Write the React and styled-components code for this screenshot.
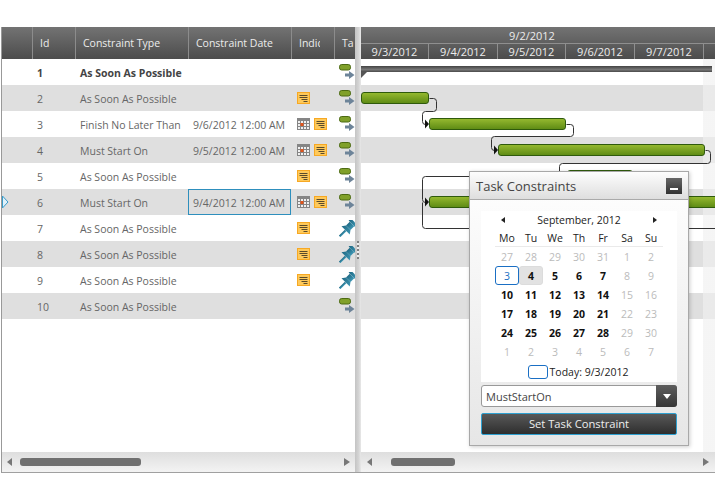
import React from 'react'
import styled, { createGlobalStyle } from 'styled-components'

const GlobalStyle = createGlobalStyle`
    body {
        margin: 0;
        background: #fff;
        font-family: "Open Sans", "Noto Sans", sans-serif;
        font-size: 10.5px;
    }
`

const COLUMNS = '31px 43px 113px 103px 43px 21px'
const WEEKEND = 'linear-gradient(90deg, transparent 342px, rgba(240, 240, 240, 0.65) 342px)'

const Gantt = styled.div`
    position: relative;
    display: flex;
    width: 714px;
    height: 446px;
    margin: 27px 0 0 1px;
    border-left: 1px solid #999;
    border-bottom: 1px solid #a0a0a0;
    box-sizing: border-box;
    overflow: hidden;
`

const GridPanel = styled.div`
    flex: 0 0 353px;
    display: flex;
    flex-direction: column;
    overflow: hidden;
`

const HeaderRow = styled.div`
    display: grid;
    grid-template-columns: ${COLUMNS};
    height: 32px;
    flex: none;
    background: linear-gradient(#737373, #4c4c4c);
`

const HeaderCell = styled.div`
    display: flex;
    align-items: center;
    padding-left: 7px;
    border-right: 1px solid #8c8c8c;
    color: #ececec;
    white-space: nowrap;
    box-sizing: border-box;
    &:last-child {
        border-right: none;
    }
`

const HeaderLabel = styled.div`
    overflow: hidden;
    max-width: ${props => props.$max ? `${props.$max}px` : 'none'};
`

const Rows = styled.div`
    flex: 1;
`

const Row = styled.div`
    display: grid;
    grid-template-columns: ${COLUMNS};
    height: 26px;
    background: ${props => props.$shaded ? '#dfdfdf' : '#fff'};
    color: ${props => props.$bold ? '#444' : '#666'};
    font-weight: ${props => props.$bold ? 700 : 400};
`

const Cell = styled.div`
    display: flex;
    align-items: center;
    padding: 1px 0 0 4px;
    white-space: nowrap;
    box-sizing: border-box;
    ${props => props.$selected && 'border: 1px solid #2e8fbd; margin: 0 1px 0 -1px;'}
`

const IconCell = styled.div`
    display: flex;
    align-items: center;
    gap: 4px;
    padding: 0 0 ${props => props.$lift || 0}px ${props => props.$pad}px;
    box-sizing: border-box;
`

const Splitter = styled.div`
    position: relative;
    flex: 0 0 6px;
    background: linear-gradient(90deg, #c4c4c4, #d4d4d4 60%, #e8e8e8);
`

const Grip = styled.div`
    position: absolute;
    left: 2px;
    top: 214px;
    width: 2px;
    height: 18px;
    background: repeating-linear-gradient(#808080 0 2px, #eee 2px 4px);
`

const TimelinePanel = styled.div`
    flex: 1;
    min-width: 0;
    display: flex;
    flex-direction: column;
    overflow: hidden;
`

const TimelineHead = styled.div`
    height: 32px;
    flex: none;
    display: flex;
    flex-direction: column;
    background: linear-gradient(#737373, #4c4c4c);
    color: #ececec;
    font-size: 11px;
`

const WeekRow = styled.div`
    height: 16px;
    width: 342px;
    display: flex;
    align-items: center;
    justify-content: center;
`

const DayRow = styled.div`
    display: flex;
    height: 15px;
    border-top: 1px solid #8f8f8f;
`

const DayCell = styled.div`
    flex: 0 0 ${props => props.$width}px;
    display: flex;
    align-items: center;
    justify-content: center;
    border-right: 1px solid #8f8f8f;
    box-sizing: border-box;
`

const TimelineBody = styled.div`
    position: relative;
    flex: 1;
    overflow: hidden;
    background: ${WEEKEND};
`

const TimelineRow = styled.div`
    position: relative;
    height: 26px;
    background: ${WEEKEND}, ${props => props.$shaded ? '#dfdfdf' : '#fff'};
`

const Bar = styled.div`
    position: absolute;
    top: 7px;
    left: ${props => props.$left}px;
    width: ${props => props.$width}px;
    height: 12px;
    border: 1px solid #2f5a0c;
    border-radius: 3px;
    background: linear-gradient(#94b82f, #5f8c15);
    box-sizing: border-box;
`

const SummaryBar = styled.div`
    position: absolute;
    top: 7px;
    left: 0;
    right: 3px;
    height: 6px;
    background: linear-gradient(#444, #777 60%, #4a4a4a);
`

const SummaryTip = styled.div`
    position: absolute;
    top: 13px;
    left: 0;
    border-top: 6px solid #555;
    border-right: 6px solid transparent;
`

const Links = styled.svg`
    position: absolute;
    top: 0;
    left: 0;
    pointer-events: none;
`

const Scrollbar = styled.div`
    position: relative;
    flex: 0 0 20px;
    background: linear-gradient(#dedede, #f3f3f3);
`

const Thumb = styled.div`
    position: absolute;
    top: 6px;
    left: ${props => props.$left}px;
    width: ${props => props.$width}px;
    height: 8px;
    border-radius: 3px;
    background: #707070;
`

const Arrow = styled.div`
    position: absolute;
    top: 6px;
    left: ${props => props.$left}px;
    border-top: 4px solid transparent;
    border-bottom: 4px solid transparent;
    ${props => props.$right ? 'border-left: 6px solid #777;' : 'border-right: 5px solid #777;'}
`

const RowMarker = styled.svg`
    position: absolute;
    left: 0;
    top: 168px;
`

const Dialog = styled.div`
    position: absolute;
    left: 467px;
    top: 144px;
    width: 220px;
    height: 275px;
    display: flex;
    flex-direction: column;
    border: 1px solid #a8a8a8;
    box-shadow: 1px 1px 4px rgba(0, 0, 0, 0.2);
    background: linear-gradient(#fff, #e6e6e6);
    box-sizing: border-box;
`

const DialogHeader = styled.div`
    flex: 0 0 28px;
    display: flex;
    align-items: center;
    justify-content: space-between;
    padding: 0 6px;
    background: linear-gradient(#fdfdfd, #dedede);
    border-bottom: 1px solid #aaa;
    box-sizing: border-box;
`

const DialogTitle = styled.div`
    padding-top: 1px;
    color: #444;
    font-size: 13px;
`

const MinButton = styled.div`
    width: 16px;
    height: 16px;
    display: flex;
    align-items: flex-end;
    justify-content: center;
    padding-bottom: 4px;
    background: linear-gradient(#666, #333);
    box-sizing: border-box;
    &::after {
        content: '';
        width: 8px;
        height: 2px;
        background: #fff;
    }
`

const DialogBody = styled.div`
    flex: 1;
    display: flex;
    flex-direction: column;
    padding: 11px 11px;
`

const Calendar = styled.div`
    height: 171px;
    display: flex;
    flex-direction: column;
    align-items: center;
    background: #fff;
`

const CalendarNav = styled.div`
    width: 156px;
    height: 17px;
    display: flex;
    align-items: center;
    justify-content: space-between;
    color: #222;
`

const NavArrow = styled.div`
    border-top: 3.5px solid transparent;
    border-bottom: 3.5px solid transparent;
    ${props => props.$right ? 'border-left: 4px solid #222;' : 'border-right: 4px solid #222;'}
`

const DayGrid = styled.div`
    display: grid;
    grid-template-columns: repeat(7, 24px);
    grid-auto-rows: 19px;
`

const WeekHead = styled.div`
    display: flex;
    align-items: center;
    justify-content: center;
    padding-top: 1px;
    color: #222;
    border-bottom: 1px solid #eaeaea;
    box-sizing: border-box;
`

const Day = styled.div`
    display: flex;
    align-items: center;
    justify-content: center;
    box-sizing: border-box;
    border-radius: 3px;
    font-weight: ${props => props.$muted ? 400 : 700};
    color: ${props => props.$muted ? '#bbb' : props.$today ? '#1a6fc4' : '#111'};
    ${props => props.$today && 'border: 1px solid #1a6fc4; font-weight: 400;'}
    ${props => props.$over && 'background: #e2e2e2; border: 1px solid #dcdcdc;'}
`

const TodayRow = styled.div`
    display: flex;
    align-items: center;
    gap: 2px;
    height: 18px;
    margin: 2px 2px 0 0;
    color: #222;
`

const TodayBox = styled.div`
    width: 20px;
    height: 14px;
    border: 1px solid #1a6fc4;
    border-radius: 3px;
    box-sizing: border-box;
`

const Combo = styled.div`
    display: flex;
    flex: none;
    height: 22px;
    margin-top: 3px;
    border: 1px solid #999;
    border-radius: 3px;
    background: #fff;
    color: #444;
    font-size: 11px;
    box-sizing: border-box;
`

const ComboText = styled.div`
    flex: 1;
    display: flex;
    align-items: center;
    padding-left: 4px;
`

const ComboButton = styled.div`
    flex: 0 0 21px;
    display: flex;
    align-items: center;
    justify-content: center;
    margin: -1px -1px -1px 0;
    border-radius: 0 3px 3px 0;
    background: linear-gradient(#5e5e5e, #363636);
    &::after {
        content: '';
        border-top: 5px solid #fff;
        border-left: 4px solid transparent;
        border-right: 4px solid transparent;
    }
`

const SetButton = styled.div`
    display: flex;
    flex: none;
    align-items: center;
    justify-content: center;
    height: 22px;
    margin-top: 6px;
    padding-bottom: 1px;
    border: 1px solid #2ea0d0;
    border-radius: 2px;
    background: linear-gradient(#585858, #2e2e2e);
    color: #eee;
    font-size: 11.2px;
    box-sizing: border-box;
`

const CalendarIcon = () => (
    <svg width="13" height="12" viewBox="0 0 13 12">
        <rect x="0" y="0" width="13" height="12" fill="#858585" />
        {[1, 4, 7, 10].map(x => [3, 6, 9].map(y => (
            <rect key={`${x}-${y}`} x={x} y={y} width="2" height="2" fill="#f0f0f0" />
        )))}
        <rect x="3.5" y="5" width="3" height="3" fill="#e2541b" />
    </svg>
)

const NoteIcon = () => (
    <svg width="13" height="12" viewBox="0 0 13 12">
        <rect x="0.5" y="0.5" width="12" height="11" fill="#fec95a" stroke="#f7a823" />
        <path d="M2.5 3.5h8M2.5 5.5h8M4.5 7.5h6M6.5 9.5h4" stroke="#5a4a2a" strokeWidth="1" />
    </svg>
)

const TaskIcon = () => (
    <svg width="17" height="16" viewBox="0 0 17 16">
        <rect x="0.5" y="0.5" width="11" height="5.5" rx="2.2" fill="#80a02a" stroke="#4c6a12" />
        <path d="M6 9.5h4V7l5.5 4-5.5 4v-2.5H6z" fill="#6d8499" />
    </svg>
)

const PinIcon = () => (
    <svg width="17" height="17" viewBox="0 0 16 16">
        <defs>
            <linearGradient id="pin" x1="0" y1="0" x2="1" y2="0">
                <stop offset="0" stopColor="#1f6a85" />
                <stop offset="1" stopColor="#3f97b4" />
            </linearGradient>
        </defs>
        <g transform="rotate(45 8 8)" fill="url(#pin)">
            <rect x="3.5" y="-1" width="9" height="3" />
            <rect x="5" y="2" width="6" height="5" />
            <path d="M5 7h6l2.5 3.5h-11z" />
            <rect x="7" y="10.5" width="2" height="8" />
        </g>
    </svg>
)

const tasks = [
    { id: 1, type: 'As Soon As Possible', bold: true, task: 'link' },
    { id: 2, type: 'As Soon As Possible', note: true, task: 'link' },
    { id: 3, type: 'Finish No Later Than', date: '9/6/2012 12:00 AM', cal: true, note: true, task: 'link' },
    { id: 4, type: 'Must Start On', date: '9/5/2012 12:00 AM', cal: true, note: true, task: 'link' },
    { id: 5, type: 'As Soon As Possible', note: true, task: 'link' },
    { id: 6, type: 'Must Start On', date: '9/4/2012 12:00 AM', cal: true, note: true, task: 'link', selected: true },
    { id: 7, type: 'As Soon As Possible', note: true, task: 'pin' },
    { id: 8, type: 'As Soon As Possible', note: true, task: 'pin' },
    { id: 9, type: 'As Soon As Possible', note: true, task: 'pin' },
    { id: 10, type: 'As Soon As Possible', task: 'link' },
]

const bars = { 2: [0, 68], 3: [68, 137], 4: [137, 207], 5: [206, 66], 6: [68, 300] }

const days = [
    [27, 28, 29, 30, 31, 1, 2],
    [3, 4, 5, 6, 7, 8, 9],
    [10, 11, 12, 13, 14, 15, 16],
    [17, 18, 19, 20, 21, 22, 23],
    [24, 25, 26, 27, 28, 29, 30],
    [1, 2, 3, 4, 5, 6, 7],
]

const links = [
    'M429 98h4q3 0 3 3v7q0 3-3 3h-8q-3 0-3 3v7q0 3 3 3h1',
    'M566 124h4q3 0 3 3v6q0 3-3 3h-76q-3 0-3 3v8q0 3 3 3h1',
    'M705 150h2q3 0 3 3v7q0 3-3 3h-145q-3 0-3 3v11',
    'M500 176h-75q-3 0-3 3v20q0 3 3 3h1',
    'M422 202v23q0 3 3 3h290',
]

const arrows = ['M425 119.5l4 4.5-4 4.5z', 'M494 145.5l4 4.5-4 4.5z', 'M425 197.5l4 4.5-4 4.5z']

const App = () => (
    <>
        <GlobalStyle />
        <Gantt>
            <GridPanel>
                <HeaderRow>
                    <HeaderCell />
                    <HeaderCell>Id</HeaderCell>
                    <HeaderCell>Constraint Type</HeaderCell>
                    <HeaderCell>Constraint Date</HeaderCell>
                    <HeaderCell><HeaderLabel $max={21}>Indic</HeaderLabel></HeaderCell>
                    <HeaderCell>Ta</HeaderCell>
                </HeaderRow>
                <Rows>
                    {tasks.map((t, i) => (
                        <Row key={t.id} $shaded={i % 2 === 1} $bold={t.bold}>
                            <Cell />
                            <Cell>{t.id}</Cell>
                            <Cell>{t.type}</Cell>
                            <Cell $selected={t.selected}>{t.date}</Cell>
                            <IconCell $pad={5} $lift={1}>
                                {t.cal && <CalendarIcon />}
                                {t.note && <NoteIcon />}
                            </IconCell>
                            <IconCell $pad={4}>{t.task === 'pin' ? <PinIcon /> : <TaskIcon />}</IconCell>
                        </Row>
                    ))}
                </Rows>
                <Scrollbar>
                    <Arrow $left={5} />
                    <Thumb $left={18} $width={121} />
                    <Arrow $left={342} $right />
                </Scrollbar>
            </GridPanel>
            <Splitter><Grip /></Splitter>
            <TimelinePanel>
                <TimelineHead>
                    <WeekRow>9/2/2012</WeekRow>
                    <DayRow>
                        <DayCell $width={68}>9/3/2012</DayCell>
                        <DayCell $width={69}>9/4/2012</DayCell>
                        <DayCell $width={68}>9/5/2012</DayCell>
                        <DayCell $width={69}>9/6/2012</DayCell>
                        <DayCell $width={69}>9/7/2012</DayCell>
                    </DayRow>
                </TimelineHead>
                <TimelineBody>
                    {tasks.map((t, i) => (
                        <TimelineRow key={t.id} $shaded={i % 2 === 1}>
                            {i === 0 && <><SummaryBar /><SummaryTip /></>}
                            {bars[t.id] && <Bar $left={bars[t.id][0]} $width={bars[t.id][1]} />}
                        </TimelineRow>
                    ))}
                    <Links width="354" height="393" viewBox="361 59 354 393">
                        <g transform="translate(0.5 0.5)">
                            {links.map(d => <path key={d} d={d} fill="none" stroke="#333" strokeWidth="1" />)}
                        </g>
                        {arrows.map(d => <path key={d} d={d} fill="#111" />)}
                    </Links>
                </TimelineBody>
                <Scrollbar>
                    <Arrow $left={6} />
                    <Thumb $left={30} $width={64} />
                    <Arrow $left={342} $right />
                </Scrollbar>
            </TimelinePanel>
            <RowMarker width="7" height="14" viewBox="0 0 7 14">
                <path d="M0.5 1L6 7 .5 13z" fill="#dff1fa" stroke="#3a9bc9" />
            </RowMarker>
            <Dialog>
                <DialogHeader>
                    <DialogTitle>Task Constraints</DialogTitle>
                    <MinButton />
                </DialogHeader>
                <DialogBody>
                    <Calendar>
                        <CalendarNav>
                            <NavArrow />
                            September, 2012
                            <NavArrow $right />
                        </CalendarNav>
                        <DayGrid>
                            {['Mo', 'Tu', 'We', 'Th', 'Fr', 'Sa', 'Su'].map(d => <WeekHead key={d}>{d}</WeekHead>)}
                            {days.map((week, w) => week.map((d, i) => {
                                const muted = w === 0 || w === 5 || (i > 4 && w > 0)
                                return (
                                    <Day key={`${w}-${i}`} $muted={muted} $today={w === 1 && i === 0} $over={w === 1 && i === 1}>
                                        {d}
                                    </Day>
                                )
                            }))}
                        </DayGrid>
                        <TodayRow>
                            <TodayBox />
                            Today: 9/3/2012
                        </TodayRow>
                    </Calendar>
                    <Combo>
                        <ComboText>MustStartOn</ComboText>
                        <ComboButton />
                    </Combo>
                    <SetButton>Set Task Constraint</SetButton>
                </DialogBody>
            </Dialog>
        </Gantt>
    </>
)

export default App
